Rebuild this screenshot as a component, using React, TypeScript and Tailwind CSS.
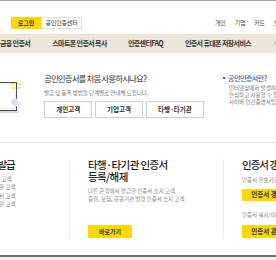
import React from "react";

const navItems = [
  { label: "금융 인증서", w: "w-[34px]" },
  { label: "스마트폰 인증서 복사", w: "w-[59px]" },
  { label: "인증센터FAQ", w: "w-[37px]" },
  { label: "인증서 휴대폰 저장서비스", w: "w-[72px]" },
  { label: "이용안내", w: "w-[30px]" },
];

const Laptop = () => (
  <svg width="60" height="40" viewBox="0 0 60 40" className="mt-[22px] shrink-0">
    <rect x="0.5" y="7.5" width="54" height="28" fill="#f3f5f7" stroke="#4a4a4a" />
    <rect x="3" y="10" width="49" height="23" fill="#ffffff" />
    <rect x="0" y="36" width="57" height="2" fill="#d6d6d6" />
    <line x1="49" y1="9" x2="53" y2="9" stroke="#ffd200" strokeWidth="1.2" />
    <line x1="55" y1="9" x2="59" y2="9" stroke="#ffd200" strokeWidth="1.2" />
    <line x1="50" y1="13" x2="53" y2="13" stroke="#ffd200" strokeWidth="1.2" />
    <line x1="55" y1="13" x2="58" y2="13" stroke="#ffd200" strokeWidth="1.2" />
    <ellipse cx="53" cy="27" rx="4" ry="3.5" fill="#cfe2f2" />
    <ellipse cx="55.5" cy="29" rx="3" ry="2.5" fill="#dceaf6" />
  </svg>
);

export default function App() {
  return (
    <div className="w-[276px] h-[260px] overflow-hidden bg-white font-['Noto_Sans_CJK_KR',sans-serif] text-[#333]">
      <div className="w-[520px] -ml-[100px]">
        {/* top header */}
        <div className="h-[34px] border-t border-[#a9a9a9] flex items-start pt-[16px]">
          <div className="ml-[111px] flex">
            <span className="w-[30px] h-[12px] bg-[#ffd800] flex items-center justify-center text-[6px] font-bold leading-none">
              로그인
            </span>
            <span className="w-[41px] h-[12px] border border-[#dcdcdc] flex items-center justify-center text-[6px] leading-none tracking-[-0.2px]">
              공인인증센터
            </span>
          </div>
          <div className="ml-[133px] mt-[2px] flex gap-[9px] text-[6px] leading-[8px] tracking-[-0.2px] text-[#444]">
            <span>개인</span>
            <span>기업</span>
            <span>카드</span>
            <span>보험</span>
          </div>
        </div>

        {/* main nav */}
        <div className="h-[19px] bg-[#ede6d8] flex items-center gap-[18px] pl-[98px] text-[7px] font-bold tracking-[-0.6px] whitespace-nowrap">
          {navItems.map((item) => (
            <span key={item.label} className={`${item.w} shrink-0 flex justify-center`}>
              {item.label}
            </span>
          ))}
        </div>

        {/* guide */}
        <div className="h-[90px] border-b border-[#e6e6e6] flex pl-[62px]">
          <Laptop />
          <div className="ml-[22px] w-[160px] pt-[19px]">
            <p className="text-[8.5px] leading-[12px] tracking-[-0.9px] text-[#333]">
              공인인증서를 처음 사용하시나요?
            </p>
            <p className="mt-[5px] text-[5.6px] leading-[8px] tracking-[-0.1px] text-[#777]">
              발급 및 등록 방법을 단계별로 안내해 드립니다.
            </p>
            <div className="mt-[4px] flex gap-[2px] text-[6.5px] font-bold">
              <span className="w-[49px] h-[17px] border border-[#cfcfcf] flex items-center justify-center">
                개인고객
              </span>
              <span className="w-[48px] h-[17px] border border-[#cfcfcf] flex items-center justify-center ml-[1px]">
                기업고객
              </span>
              <span className="w-[59px] h-[17px] border border-[#cfcfcf] flex items-center justify-center ml-[1px]">
                타행·타기관
              </span>
            </div>
          </div>
          <div className="ml-[19px] pt-[20px] whitespace-nowrap">
            <p className="flex items-center text-[7px] leading-[10px] font-medium tracking-[-0.5px] text-[#2f62b6]">
              <span className="w-[2px] h-[2px] bg-[#2f62b6] mr-[3px]" />
              공인인증서란?
            </p>
            <div className="mt-[2px] ml-[6px] text-[5.5px] leading-[7px] text-[#777]">
              <p>인터넷상에서 발생하는 모든 전자거래를</p>
              <p>안심하고 사용할 수 있도록 하는</p>
              <p>사이버 인감증명서입니다.</p>
            </div>
          </div>
        </div>

        {/* service columns */}
        <div className="flex pl-[15px] pt-[16px] whitespace-nowrap">
          <div className="w-[154px] h-[80px] pl-[26px]">
            <p className="text-[10.5px] leading-[12px] font-medium tracking-[-1px] text-[#222]">
              인증서 신규/재발급
            </p>
            <div className="mt-[4px] text-[5.5px] leading-[8.3px] text-[#777]">
              <p>처음 인증서를 발급 받으신 고객</p>
              <p>인증서를 삭제하거나 분실한 고객</p>
              <p>인증서의 유효기간이 만료된 고객</p>
              <p>인증서 비밀번호를 잊어버린 고객</p>
            </div>
          </div>
          <div className="w-[154px] h-[80px] border-l border-[#ececec] pl-[18px]">
            <p className="text-[10.5px] leading-[12px] font-medium tracking-[-0.6px] text-[#222]">
              타행·타기관 인증서
              <br />
              등록/해제
            </p>
            <div className="mt-[4px] text-[5.5px] leading-[8px] text-[#888]">
              <p>다른 은행에서 발급한 인증서 소지 고객</p>
              <p>증권, 보험, 공공기관 발행 인증서 소지 고객</p>
            </div>
            <span className="mt-[22px] w-[44px] h-[13px] bg-[#ffd800] flex items-center justify-center text-[6px] font-bold text-[#333]">
              바로가기
            </span>
          </div>
          <div className="w-[154px] h-[80px] border-l border-[#ececec] pl-[18px]">
            <p className="text-[10.5px] leading-[12px] font-medium tracking-[-1px] text-[#222]">
              인증서 갱신
            </p>
            <p className="mt-[5px] text-[5.5px] leading-[8px] text-[#888]">
              인증서 유효기간 만료 전 갱신
            </p>
            <span className="mt-[5px] w-[50px] h-[12px] bg-[#ffd800] flex items-center justify-center text-[6.5px] font-bold text-[#333]">
              인증서 갱신
            </span>
            <p className="mt-[10px] text-[5.5px] leading-[8px] text-[#888]">
              인증서 복사/이동/삭제
            </p>
            <span className="mt-[6px] w-[50px] h-[13px] bg-[#ffd800] flex items-center justify-center text-[6.5px] font-bold text-[#333]">
              인증서 관리
            </span>
          </div>
        </div>

        {/* footer */}
        <div className="mt-[16px] h-[40px] border-t-2 border-[#707070] bg-[#f1f1f1]" />
      </div>
    </div>
  );
}
